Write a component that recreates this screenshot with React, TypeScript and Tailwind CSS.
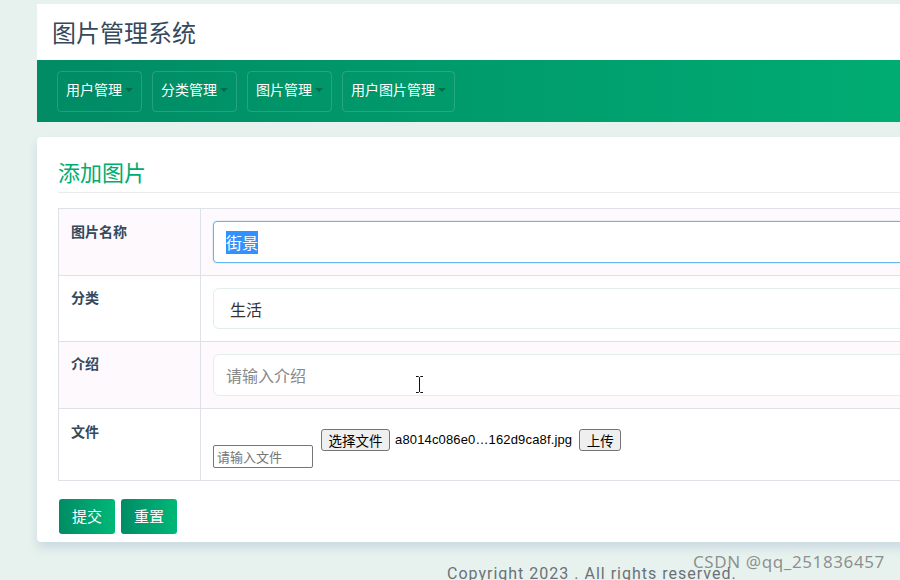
import React from "react";

const cjk = { fontFamily: '"Microsoft YaHei", "Noto Sans CJK SC", "Noto Sans", sans-serif' };

const menus = ["用户管理", "分类管理", "图片管理", "用户图片管理"];

function NavButton({ label }: { label: string }) {
  return (
    <div className="flex h-[41px] items-center rounded-[4px] border border-white/15 pl-[8px] pr-[8px] pb-[4px] text-[14px] text-white">
      <span>{label}</span>
      <span className="ml-[3px] mt-[2px] h-0 w-0 border-x-[4px] border-t-[4px] border-x-transparent border-t-[rgba(0,60,40,0.45)]" />
    </div>
  );
}

function Row({ label, striped, children, tall }: { label: string; striped?: boolean; children: React.ReactNode; tall?: boolean }) {
  return (
    <div className={`flex border-b border-[#dee2e6] ${striped ? "bg-[#fdf9fd]" : "bg-white"}`}>
      <div className={`w-[142px] shrink-0 border-r border-[#dee2e6] pl-[12px] text-[14px] font-bold text-[#34495e] ${tall ? "pt-[12px]" : "pt-[11px]"}`}>
        {label}
      </div>
      <div className="flex-1 p-[12px]">{children}</div>
    </div>
  );
}

export default function App() {
  return (
    <div className="relative h-[580px] w-[900px] overflow-hidden bg-[#e7f2ee]" style={cjk}>
      <div className="w-[1000px] pl-[37px] pt-[4px]">
        {/* header */}
        <div className="flex h-[56px] items-center bg-white pl-[15px] text-[24px] text-[#34495e]">图片管理系统</div>
        {/* nav */}
        <div className="flex h-[62px] items-center gap-[10px] bg-gradient-to-r from-[#008b65] to-[#00b074] pl-[20px]">
          {menus.map((m) => (
            <NavButton key={m} label={m} />
          ))}
        </div>

        {/* card */}
        <div className="mt-[15px] rounded-[4px] bg-white pb-[8px] pl-[21px] shadow-[0_6px_10px_rgba(170,190,210,0.45)]">
          <div className="border-b border-[#e9ecef] pb-[7px] pt-[20px] text-[22px] leading-[28px] text-[#00ac70]">添加图片</div>

          <div className="mt-[15px] border-l border-t border-[#dee2e6]">
            <Row label="图片名称" striped tall>
              <div className="flex h-[42px] items-center rounded-[4px] border border-[#66b5f0] bg-white pl-[12px] shadow-[0_0_0_1px_rgba(102,175,233,0.15)]">
                <span className="bg-[#3390ff] text-[16px] leading-[23px] text-white">街景</span>
              </div>
            </Row>
            <Row label="分类">
              <div className="flex h-[41px] items-center rounded-[6px] border border-[#e2eeec] bg-white pl-[16px] text-[16px] text-[#333]">生活</div>
            </Row>
            <Row label="介绍" striped>
              <div className="flex h-[42px] items-center rounded-[6px] border border-[#e2eeec] bg-white pl-[12px] text-[16px] text-[#888]">请输入介绍</div>
            </Row>
            <Row label="文件" tall>
              <div className="flex items-start">
                <div className="mt-[24px] flex h-[23px] w-[100px] items-center rounded-[2px] border border-[#767676] bg-white pl-[3px] text-[13px] text-[#757575]">
                  请输入文件
                </div>
                <div className="ml-[8px] mt-[8px] flex items-center text-[13px] text-black" style={{ fontFamily: '"Liberation Sans", "Noto Sans CJK SC", sans-serif' }}>
                  <span className="flex h-[22px] w-[69px] items-center justify-center rounded-[3px] border border-[#767676] bg-[#efefef] text-[13.5px]" style={cjk}>
                    选择文件
                  </span>
                  <span className="ml-[5px] tracking-[0.15px]">a8014c086e0…162d9ca8f.jpg</span>
                  <span className="ml-[7px] flex h-[22px] w-[42px] items-center justify-center rounded-[3px] border border-[#767676] bg-[#efefef] text-[13.5px]" style={cjk}>
                    上传
                  </span>
                </div>
              </div>
            </Row>
          </div>

          <div className="mt-[18px] flex gap-[6px] pl-[1px]">
            <div className="flex h-[35px] w-[56px] items-center justify-center rounded-[3px] bg-gradient-to-r from-[#008c65] to-[#00b878] text-[15px] text-white">提交</div>
            <div className="flex h-[35px] w-[56px] items-center justify-center rounded-[3px] bg-gradient-to-r from-[#008c65] to-[#00b878] text-[15px] text-white">重置</div>
          </div>
        </div>

        {/* footer */}
        <div className="mt-[20px] pl-[410px] text-[16px] tracking-[1px] text-[#6b7177]" style={{ fontFamily: "Roboto, sans-serif" }}>
          Copyright 2023 . All rights reserved.
        </div>
      </div>

      {/* watermark */}
      <div className="absolute left-[693px] top-[549px] text-[17px] tracking-[0.6px] text-[rgba(110,110,110,0.75)]" style={{ fontFamily: '"Noto Sans", sans-serif' }}>
        CSDN @qq_251836457
      </div>

      {/* text cursor */}
      <svg className="absolute left-[415px] top-[376px]" width="9" height="17" viewBox="0 0 9 17">
        <path d="M1 0.5h2.5l1 1 1-1H8M1 16.5h2.5l1-1 1 1H8M4.5 1.5v14" fill="none" stroke="#111" strokeWidth="1" />
      </svg>
    </div>
  );
}
